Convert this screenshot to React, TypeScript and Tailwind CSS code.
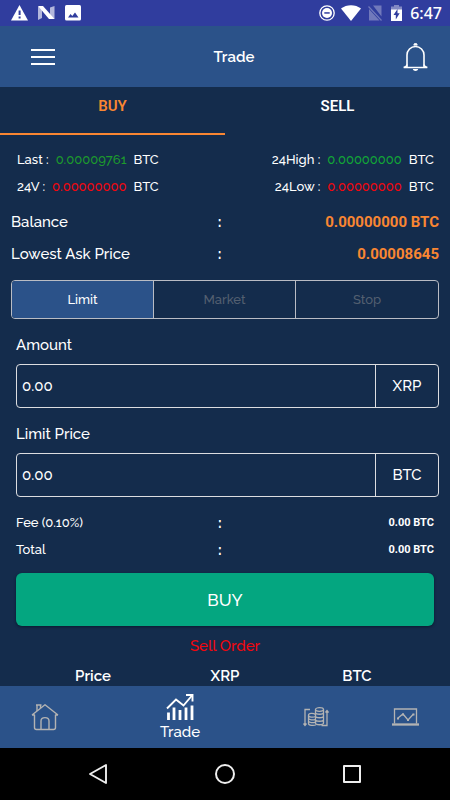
import { useState, type ReactNode } from 'react'
import clsx from 'clsx'

const orderTypes = ['Limit', 'Market', 'Stop']

export default function App() {
  return (
    <div className="flex h-screen min-h-[480px] flex-col bg-[#142c4c] font-['Raleway',Lato,sans-serif] text-[15px] font-medium leading-6 text-white">
      <StatusBar />
      <Header />
      <main className="min-h-0 flex-1 overflow-hidden">
        <SideTabs />
        <MarketStats />
        <section className="mt-1.5 px-[11px]">
          <InfoRow label="Balance" value="0.00000000 BTC" />
          <InfoRow label="Lowest Ask Price" value="0.00008645" />
        </section>
        <OrderForm />
        <SellOrders />
      </main>
      <TabBar />
      <SystemNav />
    </div>
  )
}

function StatusBar() {
  return (
    <div className="flex h-[26px] shrink-0 items-center justify-between bg-[#303d9e] pl-[11px] pr-2">
      <div className="flex items-center gap-[10px]">
        <svg width="17" height="16" viewBox="0 0 17 16" aria-hidden="true">
          <path d="M8.5 0 17 15.5H0z" fill="#fff" />
          <path d="M7.6 5.5h2v4.6h-2zM7.6 11.5h2v2h-2z" fill="#303d9e" />
        </svg>
        <svg width="17" height="16" viewBox="0 0 17 16" aria-hidden="true">
          <path d="M0 1.500 4 3v10L0 15zM12 2.500 16.500 1v13L12 12z" fill="#b3b7dc" />
          <path d="M0 1h5l11.500 13H11z" fill="#fff" />
        </svg>
        <svg width="16" height="16" viewBox="0 0 16 16" aria-hidden="true">
          <rect width="16" height="15.500" rx="1.500" fill="#fff" />
          <path d="m3 12.500 2.500-3.500 1.800 2L10 7.500l3.500 5z" fill="#303d9e" />
        </svg>
      </div>
      <div className="flex items-center">
        <svg width="16" height="16" viewBox="0 0 16 16" aria-hidden="true">
          <circle cx="8" cy="8" r="7.200" fill="none" stroke="#fff" strokeWidth="1.300" />
          <circle cx="8" cy="8" r="5" fill="#fff" />
          <path d="M5.300 7.200h5.400v1.500H5.300z" fill="#303d9e" />
        </svg>
        <svg className="ml-1.5" width="20" height="16" viewBox="0 0 20 16" aria-hidden="true">
          <path d="M0 3.500C5.500-1 14.500-1 20 3.500L10 16z" fill="#fff" />
        </svg>
        <svg className="ml-[7px]" width="14" height="16" viewBox="0 0 14 16" aria-hidden="true">
          <path d="M5 .5h8.500v11zM1 4v11.500h10.500z" fill="#7179bb" />
          <path d="m.5 1.500 13 14" stroke="#7179bb" strokeWidth="1.200" />
        </svg>
        <svg className="ml-[9px]" width="11" height="16" viewBox="0 0 11 16" aria-hidden="true">
          <path d="M3 0h5v1.500h3V5H0V1.500h3z" fill="#8389c4" />
          <path d="M0 4.500h11V16H0z" fill="#fff" />
          <path d="M6.500 4 2.500 10h2.300v4.500L8.700 8.300H6.500z" fill="#303d9e" />
        </svg>
        <span className="ml-2 font-['Noto_Sans',sans-serif] text-base">6:47</span>
      </div>
    </div>
  )
}

function Header() {
  return (
    <header className="grid h-[61px] shrink-0 grid-cols-[1fr_auto_1fr] items-center bg-[#2b5289] pl-[31px] pr-[21px]">
      <button type="button" aria-label="Open menu" className="flex w-6 flex-col gap-[5px]">
        <span className="h-0.5 bg-white" />
        <span className="h-0.5 bg-white" />
        <span className="h-0.5 bg-white" />
      </button>
      <h1 className="pl-2 font-semibold">Trade</h1>
      <button type="button" aria-label="Notifications" className="justify-self-end">
        <svg width="27" height="28" viewBox="0 0 27 28" fill="none" stroke="#fff" aria-hidden="true">
          <path d="M5 24.500V12a8.500 8.500 0 0 1 17 0v12.500" strokeWidth="1.600" />
          <path d="M5 21.500c0 1.500-1.500 2.300-3.300 3h23.600c-1.800-.7-3.300-1.500-3.300-3" strokeWidth="1.400" />
          <path d="M12 2.500V1.200c0-1 3-1 3 0v1.300" fill="#fff" strokeWidth="1" />
          <path d="M10.800 26h5.400c-.5 2.500-4.900 2.500-5.400 0z" fill="#fff" stroke="none" />
        </svg>
      </button>
    </header>
  )
}

function SideTabs() {
  const [side, setSide] = useState('BUY')
  return (
    <div role="tablist" className="grid h-12 grid-cols-2 font-[Roboto,sans-serif] font-semibold">
      {['BUY', 'SELL'].map((name) => (
        <button
          key={name}
          type="button"
          role="tab"
          aria-selected={side === name}
          onClick={() => setSide(name)}
          className={clsx(
            'flex justify-center border-b-2 pt-[7px]',
            side === name ? 'border-[#f98632] text-[#f98632]' : 'border-transparent text-white',
          )}
        >
          {name}
        </button>
      ))}
    </div>
  )
}

function MarketStats() {
  return (
    <section className="flex justify-between pl-[17px] pr-4 pt-[11px] text-[13px]">
      <div>
        <Stat label="Last" value="0.00009761" color="text-[#1d9a2c]" />
        <Stat label="24V" value="0.00000000" color="text-[#f5060c]" />
      </div>
      <div>
        <Stat label="24High" value="0.00000000" color="text-[#12a637]" />
        <Stat label="24Low" value="0.00000000" color="text-[#f5060c]" />
      </div>
    </section>
  )
}

type StatProps = {
  label: string
  value: string
  color: string
}

function Stat({ label, value, color }: StatProps) {
  return (
    <p className="flex h-[27px] items-center justify-end gap-[7px]">
      <span>{label} :</span>
      <span className={color}>{value}</span>
      <span>BTC</span>
    </p>
  )
}

function InfoRow({ label, value, small }: { label: string; value: string; small?: boolean }) {
  return (
    <div className={clsx('grid grid-cols-[29fr_31fr] items-center', small ? 'h-[27px] text-[13px]' : 'h-8')}>
      <span>{label}</span>
      <span className="flex items-center justify-between">
        <b className="text-[15px]">:</b>
        <b
          className={clsx(
            'font-[Roboto,sans-serif]',
            small ? 'text-[11px]' : 'text-[#f98632]',
          )}
        >
          {value}
        </b>
      </span>
    </div>
  )
}

function OrderForm() {
  const [type, setType] = useState('Limit')
  return (
    <form className="mt-2.5" onSubmit={(e) => e.preventDefault()}>
      <div className="mx-[11px] grid h-[39px] grid-cols-3 overflow-hidden rounded-sm border border-[#b9bcc4] text-[13px]">
        {orderTypes.map((name) => (
          <button
            key={name}
            type="button"
            aria-pressed={type === name}
            onClick={() => setType(name)}
            className={clsx(
              'border-r border-[#b9bcc4] last:border-r-0',
              type === name ? 'bg-[#2b5289] text-white' : 'text-[#535f70]',
            )}
          >
            {name}
          </button>
        ))}
      </div>
      <AmountField id="amount" label="Amount" unit="XRP" />
      <AmountField id="limit-price" label="Limit Price" unit="BTC" />
      <div className="mt-3 px-4">
        <InfoRow small label="Fee (0.10%)" value="0.00 BTC" />
        <InfoRow small label="Total" value="0.00 BTC" />
        <button
          type="submit"
          className="mt-2.5 h-[53px] w-full rounded-md bg-[#04a680] text-[17px] shadow-sm shadow-[#0c1d33]"
        >
          BUY
        </button>
      </div>
    </form>
  )
}

function AmountField({ id, label, unit }: { id: string; label: string; unit: string }) {
  return (
    <div className="mt-3.5 pl-4 pr-[11px]">
      <label htmlFor={id} className="block">
        {label}
      </label>
      <div className="mt-[7px] flex h-11 rounded-sm border border-[#dcdde0]">
        <input
          id={id}
          defaultValue="0.00"
          inputMode="decimal"
          className="min-w-0 flex-1 bg-transparent px-[5px] outline-none"
        />
        <span className="flex w-[63px] items-center justify-center border-l border-[#dcdde0]">{unit}</span>
      </div>
    </div>
  )
}

function SellOrders() {
  return (
    <section className="mt-2 px-[27px]">
      <h2 className="text-center text-[#f5060c]">Sell Order</h2>
      <table className="mt-1.5 w-full table-fixed">
        <thead>
          <tr>
            <th className="font-semibold">Price</th>
            <th className="font-semibold">XRP</th>
            <th className="font-semibold">BTC</th>
          </tr>
        </thead>
      </table>
    </section>
  )
}

function TabBar() {
  return (
    <nav className="grid h-[62px] shrink-0 grid-cols-[1fr_2fr_1fr_1fr] items-center bg-[#2b5289] text-[#b3b3b3]">
      <TabLink label="Home">
        <svg width="28" height="28" viewBox="0 0 28 28" fill="none" stroke="currentColor" strokeWidth="1.400" aria-hidden="true">
          <path d="M1 12 14 1.800 27 12M1 12h2.500v12.500q0 2 2 2h17q2 0 2-2V12H27" strokeLinejoin="round" />
          <path d="M6 8V2h3.500v3M5 2h5.500M10 26.500V18c0-4.500 8-4.500 8 0v8.500" />
        </svg>
      </TabLink>
      <TabLink label="Trade" active>
        <svg width="28" height="27" viewBox="0 0 28 27" fill="none" stroke="currentColor" aria-hidden="true">
          <path d="M1 15.500 10 6.500l7.500 6L26 2.500" strokeWidth="1.900" />
          <path d="M20 2h6.500v6.500" strokeWidth="1.900" />
          <path d="M2.500 27v-7.500M8 27V14.500M14 27V17M20 27V14.500M26 27V12.500" strokeWidth="2.800" />
        </svg>
      </TabLink>
      <TabLink label="Funds">
        <svg width="28" height="20" viewBox="-2 0 28 20" fill="none" stroke="currentColor" strokeWidth="1.300" aria-hidden="true">
          <path d="M7 2.500H2V18M.5 16.500 2 18.500l1.500-2M18.500 18.500H24V4M22.500 5.500 24 3.500l1.500 2" />
          <ellipse cx="16.500" cy="2.500" rx="4" ry="1.800" />
          <path d="M12.500 2.500v13.500c0 2.300 8 2.300 8 0V2.500M12.500 5.500c0 2.300 8 2.300 8 0M12.500 9c0 2.300 8 2.300 8 0M12.500 12.500c0 2.300 8 2.300 8 0" />
          <path d="M12.500 7.500c-2-1.500-7-1.500-7 .7s5 2.300 7 1.300M5.500 8v8.500c0 2.200 5.500 2.400 7.500 1.300M5.500 11c0 2 5 2.300 7 1.300M5.500 13.800c0 2 5 2.300 7 1.300" />
        </svg>
      </TabLink>
      <TabLink label="Charts">
        <svg width="27" height="18" viewBox="0 0 27 18" fill="none" stroke="currentColor" strokeWidth="1.300" aria-hidden="true">
          <path d="M2.500 15.500V1h22v14.500" />
          <path d="M.5 16h26v1H.5z" />
          <path d="m6 10 5-4 5 6 5.500-6" />
          <path d="M5 9.500h2v2H5zM10 5.500h2v2h-2zM15 11h2v2h-2zM20.500 5.500h2v2h-2z" fill="currentColor" stroke="none" />
        </svg>
      </TabLink>
    </nav>
  )
}

function TabLink({ label, active, children }: { label: string; active?: boolean; children: ReactNode }) {
  return (
    <a
      href={`#${label.toLowerCase()}`}
      aria-label={label}
      aria-current={active ? 'page' : undefined}
      className={clsx('flex flex-col items-center', active && 'text-white')}
    >
      {children}
      {active && <span className="mt-0.5 leading-5">{label}</span>}
    </a>
  )
}

function SystemNav() {
  return (
    <div className="grid h-[52px] shrink-0 grid-cols-3 items-center justify-items-center bg-black px-[34px]">
      <button type="button" aria-label="Back">
        <svg width="20" height="22" viewBox="0 0 20 22" aria-hidden="true">
          <path d="M18 2v18L2 11z" fill="none" stroke="#eee" strokeWidth="1.900" strokeLinejoin="round" />
        </svg>
      </button>
      <button type="button" aria-label="Home screen" className="size-5 rounded-full border-2 border-[#eee]" />
      <button type="button" aria-label="Recent apps" className="size-[18px] rounded-[1px] border-2 border-[#eee]" />
    </div>
  )
}
